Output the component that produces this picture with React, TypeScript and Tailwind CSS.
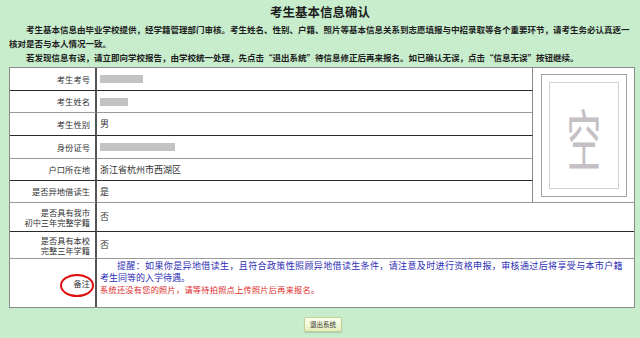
const FONT = "font-['Noto_Sans_CJK_SC','Noto_Sans',sans-serif]"

const DARK = 'border-[#2a2a2a]'
const LIGHT = 'border-[#9a9a9a]'

// 前六行：右侧与照片并排
const TOP_ROWS: { label: string; value?: string; bar?: number; line: string }[] = [
  { label: '考生考号', bar: 43, line: DARK },
  { label: '考生姓名', bar: 28, line: LIGHT },
  { label: '考生性别', value: '男', line: DARK },
  { label: '身份证号', bar: 75, line: LIGHT },
  { label: '户口所在地', value: '浙江省杭州市西湖区', line: DARK },
  { label: '是否异地借读生', value: '是', line: LIGHT },
]

export default function App() {
  return (
    <div className={`w-[640px] h-[338px] bg-[#c7edcc] overflow-hidden text-[#1e1e1e] ${FONT}`}>
      <h1 className="pt-[3px] h-[22px] text-center text-[12.5px] leading-[18px] font-bold">考生基本信息确认</h1>

      <div className="ml-[9px] w-[620px] text-[8.5px] leading-[14px] font-bold">
        <p className="indent-[17px] text-justify [text-align-last:justify] whitespace-nowrap">
          考生基本信息由毕业学校提供，经学籍管理部门审核。考生姓名、性别、户籍、照片等基本信息关系到志愿填报与中招录取等各个重要环节，请考生务必认真逐一
        </p>
        <p>核对是否与本人情况一致。</p>
        <p className="indent-[17px] whitespace-nowrap">
          若发现信息有误，请立即向学校报告，由学校统一处理，先点击“退出系统”待信息修正后再来报名。如已确认无误，点击“信息无误”按钮继续。
        </p>
      </div>

      <div className="mt-[3px] ml-[9px] w-[626px] border border-[#8a8a8a] bg-white grid grid-cols-[87px_436px_101px] grid-rows-[23px_22px_23px_23px_22px_22px_29px_27px_48px] text-[#333]">
        {TOP_ROWS.map(r => (
          <Row key={r.label} label={r.label} line={r.line}>
            {r.bar ? <div className="h-[8px] bg-[#c3c3c3]" style={{ width: r.bar }} /> : <span className="text-[9px]">{r.value}</span>}
          </Row>
        ))}

        <div className={`col-start-3 row-start-1 row-span-6 border-b ${LIGHT}`}>
          <div className="ml-[8px] mt-[6px] w-[86px] h-[123px] border border-[#a3a3a3] p-[7px] flex">
            <div className="flex-1 border border-[#d2d2d2] flex items-center justify-center overflow-hidden">
              <span className="text-[66px] leading-none text-[#c4c0c4] scale-x-[0.52] inline-block">空</span>
            </div>
          </div>
        </div>

        <div className={`border-r-2 border-r-[#555] border-b ${DARK} flex flex-col items-end justify-center pr-[5px] text-[8.2px] leading-[10.5px]`}>
          <span>是否具有我市</span>
          <span>初中三年完整学籍</span>
        </div>
        <div className={`col-span-2 border-b ${DARK} flex items-center pl-[3px] text-[9px]`}>否</div>

        <div className={`border-r-2 border-r-[#555] border-b ${LIGHT} flex flex-col items-end justify-center pr-[5px] text-[8.2px] leading-[10.5px]`}>
          <span>是否具有本校</span>
          <span>完整三年学籍</span>
        </div>
        <div className={`col-span-2 border-b ${LIGHT} flex items-center pl-[3px] text-[9px]`}>否</div>

        <div className="relative border-r-2 border-r-[#555] flex items-center justify-end pr-[5px] text-[8.2px]">
          <span>备注</span>
          <div className="absolute left-[50px] top-[15px] w-[34px] h-[23px] rounded-[50%] border-[2.5px] border-[#e01010]" />
        </div>
        <div className="col-span-2 pl-[3px] pt-[1px]">
          <p className="text-[9px] leading-[12px] text-[#2d2db4] indent-[17px] tracking-[0.37px] whitespace-nowrap">
            提醒：如果你是异地借读生，且符合政策性照顾异地借读生条件，请注意及时进行资格申报，审核通过后将享受与本市户籍
          </p>
          <p className="text-[9px] leading-[12px] text-[#2d2db4]">考生同等的入学待遇。</p>
          <p className="text-[8.2px] leading-[10px] tracking-[0.25px] text-[#e02a2a]">系统还没有您的照片，请等待拍照点上传照片后再来报名。</p>
        </div>
      </div>

      <button className="mt-[5px] ml-[304px] w-[38px] h-[15px] rounded-[2px] border border-[#c3d196] bg-gradient-to-b from-[#fdfff0] to-[#e4eebd] text-[6.5px] leading-none text-[#333] shadow-[0_1px_1px_rgba(0,0,0,0.15)]">
        退出系统
      </button>
    </div>
  )
}

function Row({ label, line, children }: { label: string; line: string; children: React.ReactNode }) {
  return (
    <>
      <div className={`border-r-2 border-r-[#555] border-b ${line} flex items-center justify-end pr-[5px] text-[8.3px]`}>{label}</div>
      <div className={`border-r border-r-[#8a8a8a] border-b ${line} flex items-center pl-[3px]`}>{children}</div>
    </>
  )
}
